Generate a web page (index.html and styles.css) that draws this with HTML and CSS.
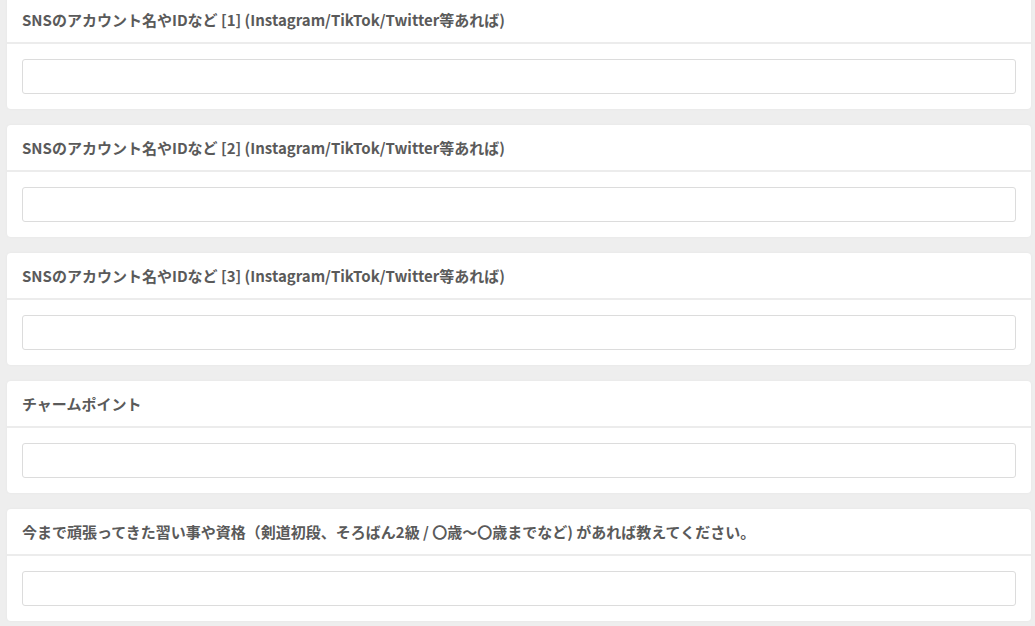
FILE: index.html
```
<html>
	<head>
		<meta charset="utf-8">
		<link rel="stylesheet" href="styles.css">
	</head>
	<body>
		<div class="wrap">
			<div class="card">
				<div class="card-head">SNSのアカウント名やIDなど [1] (Instagram/TikTok/Twitter等あれば)</div>
				<div class="card-body"><input type="text"></div>
			</div>
			<div class="card">
				<div class="card-head">SNSのアカウント名やIDなど [2] (Instagram/TikTok/Twitter等あれば)</div>
				<div class="card-body"><input type="text"></div>
			</div>
			<div class="card">
				<div class="card-head">SNSのアカウント名やIDなど [3] (Instagram/TikTok/Twitter等あれば)</div>
				<div class="card-body"><input type="text"></div>
			</div>
			<div class="card">
				<div class="card-head">チャームポイント</div>
				<div class="card-body"><input type="text"></div>
			</div>
			<div class="card">
				<div class="card-head">今まで頑張ってきた習い事や資格（剣道初段、そろばん2級 / 〇歳〜〇歳までなど) があれば教えてください。</div>
				<div class="card-body"><input type="text"></div>
			</div>
		</div>
	</body>
</html>
```
FILE: styles.css
```
*{
	margin:0;
	padding:0;
	box-sizing:border-box;
}
body{
	background:#eeeeee;
	font-family:"Noto Sans CJK JP","Liberation Sans",sans-serif;
	overflow:hidden;
}
.wrap{
	width:1024px;
	margin:-3px 0 0 7px;
	display:flex;
	flex-direction:column;
	gap:16px;
}
.card{
	background:#fff;
	border-radius:4px;
	box-shadow:0 0 3px rgba(0,0,0,.04);
}
.card-head{
	height:47px;
	padding:0 15px 1px;
	display:flex;
	align-items:center;
	font-size:15px;
	font-weight:bold;
	color:#5a5a5a;
	border-bottom:2px solid #ececec;
}
.card-body{
	padding:15px;
}
.card-body input{
	display:block;
	width:100%;
	height:35px;
	border:1px solid #dcdcdc;
	border-radius:3px;
	background:#fff;
}
```
